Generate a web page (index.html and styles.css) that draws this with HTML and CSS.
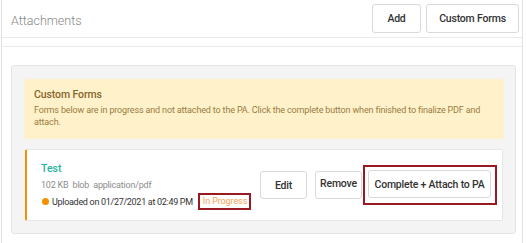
FILE: index.html
```html
<!DOCTYPE html>
<html lang="en">
<head>
  <meta charset="UTF-8" />
  <title>Attachments</title>
  <link rel="stylesheet" href="styles.css">
</head>
<body>

<div class="page">
  <div class="page-header">
    <h2>Attachments</h2>
    <div class="header-actions">
      <button class="btn btn-add">Add</button>
      <button class="btn btn-forms">Custom Forms</button>
    </div>
  </div>
  <div class="sub-bar"></div>

  <div class="forms-panel">
    <div class="alert">
      <h4>Custom Forms</h4>
      <p>Forms below are in progress and not attached to the PA. Click the complete button when finished to finalize PDF and attach.</p>
    </div>

    <div class="form-item">
      <div class="item-info">
        <div class="item-name">Test</div>
        <div class="item-meta">102 KB&nbsp; blob&nbsp; application/pdf</div>
        <div class="item-status">
          <span class="dot"></span>
          <span>Uploaded on 01/27/2021 at 02:49 PM</span>
          <span class="mark mark-status"><span class="progress">In Progress</span></span>
        </div>
      </div>
      <div class="item-actions">
        <button class="btn btn-edit">Edit</button>
        <button class="btn btn-remove">Remove</button>
        <span class="mark mark-btn"><button class="btn btn-complete">Complete + Attach to PA</button></span>
      </div>
    </div>
  </div>
</div>

</body>
</html>
```

FILE: styles.css
```css
* { box-sizing: border-box; }

body {
  margin: 0;
  font-family: Roboto, "Open Sans", sans-serif;
  color: #333;
  background: #fff;
}

.page {
  margin: 0 3px 0 1px;
  min-height: 243px;
  border-left: 1px solid #e2e2e2;
  border-right: 1px solid #e2e2e2;
}

.page-header {
  display: flex;
  justify-content: space-between;
  align-items: flex-start;
  height: 38px;
  padding: 4px 3px 0 9px;
  border-bottom: 1px solid #ebebeb;
}

.page-header h2 {
  margin: 9px 0 0;
  font-size: 12.5px;
  font-weight: 300;
  color: #888;
  white-space: nowrap;
}

.header-actions {
  display: flex;
  gap: 5px;
}

.btn {
  font-family: inherit;
  font-size: 10.5px;
  font-weight: 500;
  letter-spacing: -0.2px;
  color: #333;
  background: #fff;
  border: 1px solid #d9d9d9;
  border-radius: 3px;
  padding: 0;
  white-space: nowrap;
  flex-shrink: 0;
  cursor: pointer;
}

.btn-add { width: 49px; height: 29px; }
.btn-forms { width: 93px; height: 29px; }

.sub-bar {
  height: 9px;
  border-bottom: 1px solid #ebebeb;
}

.forms-panel {
  margin: 18px 6px 0 9px;
  padding: 13px 11px 12px 12px;
  background: #f4f4f4;
  border: 1px solid #e4e4e4;
  border-radius: 3px;
}

.alert {
  height: 60px;
  padding: 8px 10px;
  background: #fff2cb;
  border-radius: 3px;
  color: #9a7b3e;
}

.alert h4 {
  margin: 0 0 2px;
  font-size: 10.5px;
  font-weight: 500;
  letter-spacing: -0.1px;
  color: #86652b;
  line-height: 15px;
}

.alert p {
  margin: 0;
  font-size: 9px;
  letter-spacing: -0.15px;
  line-height: 12px;
}

.form-item {
  display: flex;
  justify-content: space-between;
  align-items: center;
  height: 72px;
  margin: 10px 1px 0;
  padding: 0 5px 0 14px;
  background: #fff;
  border: 1px solid #e6e6e6;
  border-left: 2px solid #f39200;
  border-radius: 2px;
}

.item-info {
  white-space: nowrap;
}

.item-name {
  font-size: 10.5px;
  font-weight: 500;
  color: #27b39b;
  line-height: 18px;
}

.item-meta {
  font-size: 9px;
  letter-spacing: -0.2px;
  color: #8c8c8c;
  line-height: 14px;
}

.item-status {
  display: flex;
  align-items: center;
  margin-top: 1px;
  font-size: 9px;
  letter-spacing: -0.3px;
  color: #333;
}

.dot {
  width: 7px;
  height: 7px;
  margin: 0 3px 0 1px;
  border-radius: 50%;
  background: #f39200;
}

.mark {
  display: inline-block;
  flex-shrink: 0;
  border: 2px solid #981b24;
}

.mark-status {
  margin-left: 5px;
  padding: 1px 2px 2px 3px;
  letter-spacing: -0.1px;
}

.progress {
  color: #f7a25b;
}

.item-actions {
  display: flex;
  align-items: center;
  flex-shrink: 0;
}

.btn-edit { width: 47px; height: 28px; margin-right: 8px; }
.btn-remove { width: 47px; height: 28px; margin-right: 1px; padding-bottom: 3px; }

.mark-btn {
  padding: 3px 4px 5px 3px;
}

.btn-complete {
  display: block;
  width: 123px;
  height: 28px;
}
```
